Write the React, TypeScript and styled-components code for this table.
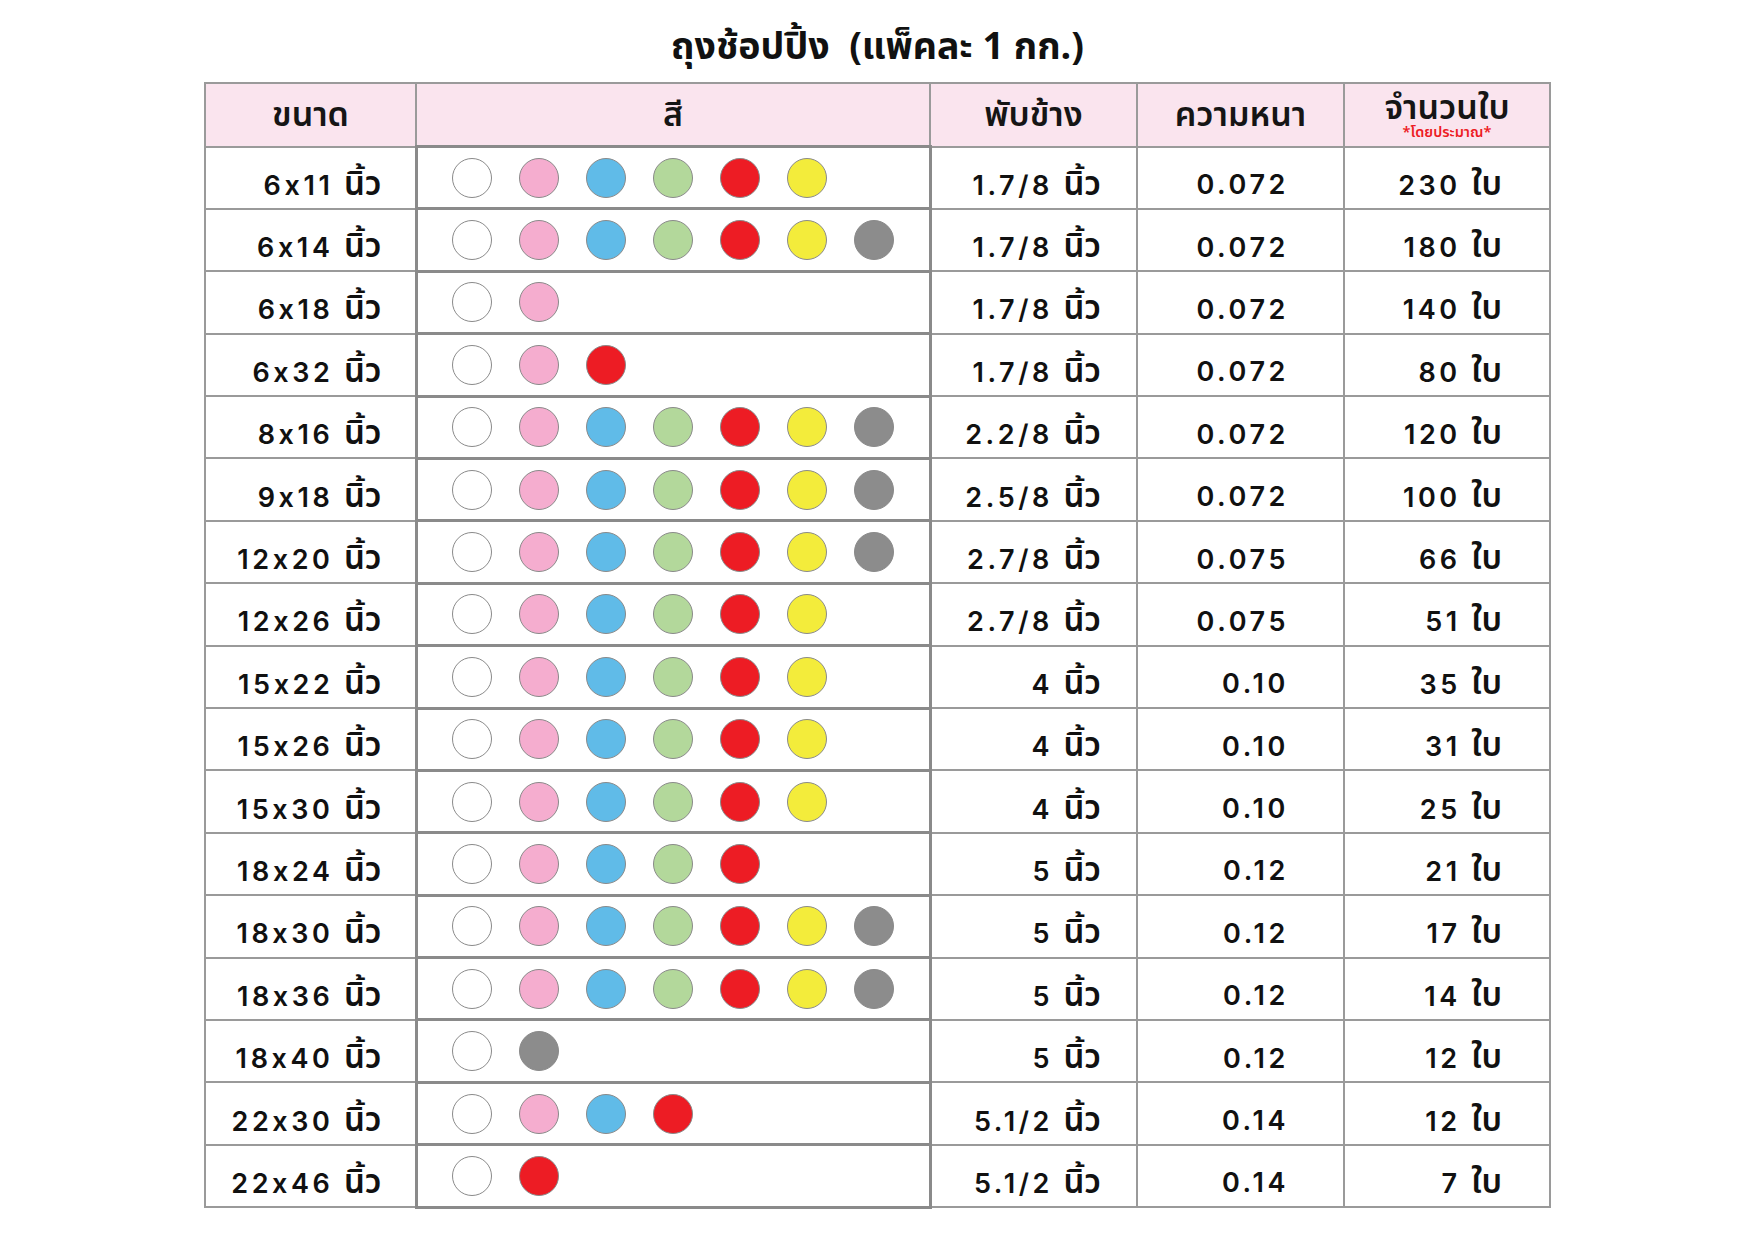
import styled, { createGlobalStyle } from "styled-components";

const GlobalStyle = createGlobalStyle`
  html, body {
    margin: 0;
    padding: 0;
    background: #ffffff;
  }
  body {
    font-family: Inter, "Noto Sans Thai", "Noto Sans", sans-serif;
    color: #111111;
  }
`;

type Bag = {
  size: string;
  colors: string[];
  fold: string;
  thick: string;
  count: string;
};

const ALL = ["white", "pink", "blue", "green", "red", "yellow", "gray"];
const SIX = ALL.slice(0, 6);

const bags: Bag[] = [
  { size: "6x11", colors: SIX, fold: "1.7/8", thick: "0.072", count: "230" },
  { size: "6x14", colors: ALL, fold: "1.7/8", thick: "0.072", count: "180" },
  { size: "6x18", colors: ["white", "pink"], fold: "1.7/8", thick: "0.072", count: "140" },
  { size: "6x32", colors: ["white", "pink", "red"], fold: "1.7/8", thick: "0.072", count: "80" },
  { size: "8x16", colors: ALL, fold: "2.2/8", thick: "0.072", count: "120" },
  { size: "9x18", colors: ALL, fold: "2.5/8", thick: "0.072", count: "100" },
  { size: "12x20", colors: ALL, fold: "2.7/8", thick: "0.075", count: "66" },
  { size: "12x26", colors: SIX, fold: "2.7/8", thick: "0.075", count: "51" },
  { size: "15x22", colors: SIX, fold: "4", thick: "0.10", count: "35" },
  { size: "15x26", colors: SIX, fold: "4", thick: "0.10", count: "31" },
  { size: "15x30", colors: SIX, fold: "4", thick: "0.10", count: "25" },
  { size: "18x24", colors: ["white", "pink", "blue", "green", "red"], fold: "5", thick: "0.12", count: "21" },
  { size: "18x30", colors: ALL, fold: "5", thick: "0.12", count: "17" },
  { size: "18x36", colors: ALL, fold: "5", thick: "0.12", count: "14" },
  { size: "18x40", colors: ["white", "gray"], fold: "5", thick: "0.12", count: "12" },
  { size: "22x30", colors: ["white", "pink", "blue", "red"], fold: "5.1/2", thick: "0.14", count: "12" },
  { size: "22x46", colors: ["white", "red"], fold: "5.1/2", thick: "0.14", count: "7" },
];

const SWATCH: Record<string, string> = {
  white: "#ffffff",
  pink: "#f5adcf",
  blue: "#60bbe8",
  green: "#b3d89b",
  red: "#ed1c24",
  yellow: "#f3ec3b",
  gray: "#8c8c8c",
};

function App() {
  return (
    <Page>
      <GlobalStyle />
      <Title>ถุงช้อปปิ้ง&nbsp;&nbsp;(แพ็คละ 1 กก.)</Title>
      <Table>
        <colgroup>
          <col style={{ width: 211 }} />
          <col style={{ width: 514 }} />
          <col style={{ width: 207 }} />
          <col style={{ width: 207 }} />
          <col style={{ width: 206 }} />
        </colgroup>
        <thead>
          <tr>
            <Head>ขนาด</Head>
            <Head>สี</Head>
            <Head>พับข้าง</Head>
            <Head>ความหนา</Head>
            <Head>
              <HeadStack>
                <HeadMain>จำนวนใบ</HeadMain>
                <Note>*โดยประมาณ*</Note>
              </HeadStack>
            </Head>
          </tr>
        </thead>
        <tbody>
          {bags.map((b) => (
            <Row key={b.size}>
              <Cell $pad={33}>
                {b.size} <Thai>นิ้ว</Thai>
              </Cell>
              <ColorCell>
                <Dots>
                  {b.colors.map((c) => (
                    <Dot key={c} $color={SWATCH[c]} />
                  ))}
                </Dots>
              </ColorCell>
              <Cell $pad={35}>
                {b.fold} <Thai>นิ้ว</Thai>
              </Cell>
              <Cell $pad={54}>{b.thick}</Cell>
              <Cell $pad={47}>
                {b.count} <Thai>ใบ</Thai>
              </Cell>
            </Row>
          ))}
        </tbody>
      </Table>
    </Page>
  );
}

const Page = styled.div`
  width: 1755px;
  padding-top: 22px;
  display: flex;
  flex-direction: column;
  align-items: center;
`;

const Title = styled.h1`
  margin: 0 0 8px;
  font-family: "Noto Sans Thai", "Noto Sans", sans-serif;
  font-size: 37.5px;
  font-weight: 700;
  line-height: 52px;
  color: #111111;
`;

const Table = styled.table`
  width: 1345px;
  table-layout: fixed;
  border-collapse: collapse;
  border: 2px solid #9a9a9a;
`;

const Head = styled.th`
  height: 58px;
  padding: 3px 0 0;
  background: #fae4ee;
  border: 2px solid #9a9a9a;
  font-family: "Noto Sans Thai", "Noto Sans", sans-serif;
  font-size: 34px;
  font-weight: 600;
  line-height: 40px;
  color: #151515;
  text-align: center;
  vertical-align: middle;
`;

const HeadStack = styled.div`
  display: flex;
  flex-direction: column;
  align-items: center;
  margin-top: 0;
`;

const HeadMain = styled.span`
  line-height: 32px;
`;

const Note = styled.span`
  font-size: 14.5px;
  font-weight: 600;
  line-height: 14px;
  margin-top: 1px;
  color: #ed1c24;
`;

const Row = styled.tr`
  height: 62.4px;
`;

const Cell = styled.td<{ $pad: number }>`
  padding: 15px ${({ $pad }) => $pad}px 0 0;
  border: 2px solid #9a9a9a;
  text-align: right;
  vertical-align: middle;
  font-size: 27px;
  font-weight: 600;
  line-height: 40px;
  letter-spacing: 3.6px;
  white-space: nowrap;
  color: #111111;
`;

const Thai = styled.span`
  font-family: "Noto Sans Thai", "Noto Sans", sans-serif;
  font-size: 33px;
  font-weight: 600;
  letter-spacing: 0;
`;

const ColorCell = styled.td`
  padding: 0 0 0 34px;
  border: 3px solid #8a8a8a;
  vertical-align: middle;
`;

const Dots = styled.div`
  display: flex;
  align-items: center;
  gap: 27px;
`;

const Dot = styled.span<{ $color: string }>`
  width: 38px;
  height: 38px;
  border-radius: 50%;
  background: ${({ $color }) => $color};
  border: 1px solid #8a8a8a;
  flex: none;
`;

export default App;
